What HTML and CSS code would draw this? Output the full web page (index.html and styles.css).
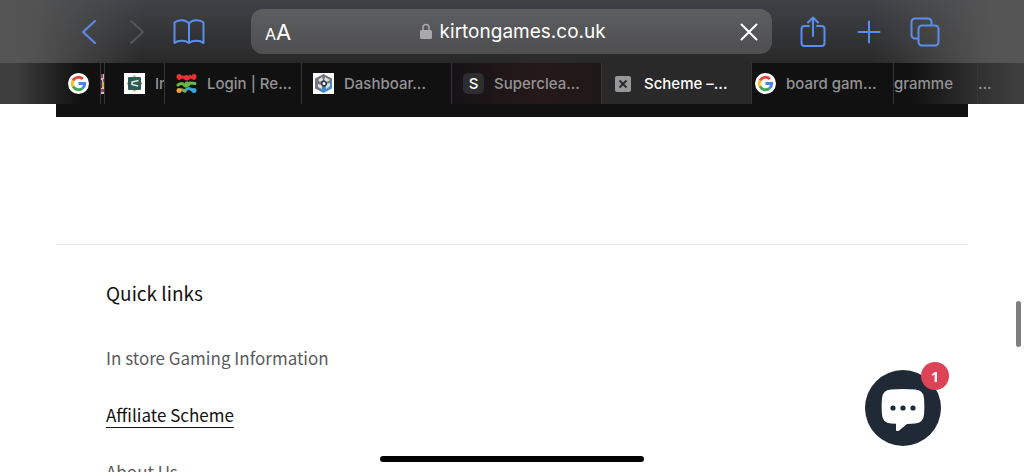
FILE: index.html
```html
<!DOCTYPE html>
<html lang="en">
<head>
  <meta charset="UTF-8" />
  <meta name="viewport" content="width=device-width, initial-scale=1.0"/>
  <title>Scheme – Kirton Games</title>
  <link rel="stylesheet" href="styles.css">
</head>
<body>
  <header class="browser">
    <div class="toolbar">
      <div class="nav-buttons">
        <button class="tool" aria-label="Back">
          <svg width="16" height="26" viewBox="0 0 16 26"><path d="M14 2 2 13l12 11"/></svg>
        </button>
        <button class="tool" aria-label="Forward" disabled>
          <svg width="16" height="26" viewBox="0 0 16 26"><path d="M2 2l12 11L2 24"/></svg>
        </button>
        <button class="tool wide" aria-label="Bookmarks">
          <svg width="32" height="26" viewBox="0 0 32 26"><path d="M16 4.500C13 .5 5 .2 1.500 3.500V24c3.500-3 11-3 14.500 0 3.500-3 11-3 14.500 0V3.500C27 .2 19 .5 16 4.500V24"/></svg>
        </button>
      </div>

      <form class="address">
        <button type="button" class="text-size" aria-label="Page settings"><small>A</small>A</button>
        <div class="site">
          <label for="url" aria-label="Address">
            <svg width="12" height="17" viewBox="0 0 12 17"><path d="M3 8V4.500a3 3 0 0 1 6 0V8" fill="none" stroke="#a9a9ac" stroke-width="1.500"/><rect y="7" width="12" height="9" rx="1.500" fill="#a9a9ac"/></svg>
          </label>
          <input id="url" type="text" value="kirtongames.co.uk" />
        </div>
        <button type="button" class="stop" aria-label="Stop loading">
          <svg width="18" height="18" viewBox="0 0 18 18"><path d="M1.500 1.500l15 15M16.500 1.500l-15 15"/></svg>
        </button>
      </form>

      <div class="page-buttons">
        <button class="tool wide" aria-label="Share">
          <svg width="26" height="32" viewBox="0 0 26 32"><path d="M9 10H4.500a3 3 0 0 0-3 3v14a3 3 0 0 0 3 3h17a3 3 0 0 0 3-3V13a3 3 0 0 0-3-3H17M13 20V2M8 6.500l5-5 5 5"/></svg>
        </button>
        <button class="tool wide" aria-label="New tab">
          <svg width="24" height="24" viewBox="0 0 24 24"><path d="M12 1.500v21M1.500 12h21"/></svg>
        </button>
        <button class="tool wide" aria-label="All tabs">
          <svg width="30" height="30" viewBox="0 0 30 30"><rect x="8.500" y="8.500" width="20" height="20" rx="3.500"/><path d="M8 21.500H5A3.500 3.500 0 0 1 1.500 18V5A3.500 3.500 0 0 1 5 1.500h13A3.500 3.500 0 0 1 21.500 5v3"/></svg>
        </button>
      </div>
    </div>

    <nav class="tabs" aria-label="Open tabs">
      <a class="tab end" href="#">
        <svg class="favicon" viewBox="0 0 22 22"><use href="#google"/></svg>
      </a>
      <a class="tab sliver" href="#" aria-label="Stacked tab">
        <svg width="4" height="20" viewBox="0 0 4 20"><path fill="#d9b9c4" d="M0 0h4v20H0z"/><path fill="#8c4562" d="M0 0h2v4H0zM2 5h2v3H2zM0 15h4v3H0z"/><path fill="#d8b13a" d="M1 8h3v5H1z"/><path fill="#4b2c4d" d="M0 6h1v8H0z"/></svg>
      </a>
      <a class="tab inset" href="#">
        <svg class="favicon" viewBox="0 0 21 21"><path fill="#fff" d="M0 0h21v21H0z"/><path fill="#d9ab35" d="M10.500 2l2.500 3h3v3l2.500 2.500L16 13v3h-3l-2.500 3L8 16H5v-3l-2.500-2.500L5 8V5h3z"/><rect x="4" y="4" width="13" height="13" rx="1" fill="#2d5c58"/><path fill="none" stroke="#dfeee0" stroke-width="1.500" d="M14.500 7.500L8 9v2.500l6 1.500"/></svg>
        <span>In</span>
      </a>
      <a class="tab" href="#">
        <svg class="favicon" viewBox="0 0 21 21"><g fill="none" stroke-linecap="round" stroke-width="3"><path stroke="#dc3232" d="M3 5.500q3-3 6-.5t5-1.500l4 2"/><path stroke="#69b845" d="M2 12q4-3 6 0t6-2l5 .5"/><path stroke="#38a5dc" d="M9 18q3-4 6-1.500l3 1"/><path stroke="#7cae60" d="M4 17q2-1 5 1"/></g><g fill="#ea3434"><circle cx="3" cy="3.500" r="2.500"/><circle cx="10.500" cy="4.500" r="2.500"/><circle cx="18" cy="3.500" r="2.500"/></g><circle cx="11" cy="11" r="2.500" fill="#69b845"/><circle cx="3" cy="17.500" r="2.500" fill="#f0a034"/><circle cx="18" cy="17.500" r="2.500" fill="#38a5dc"/></svg>
        <span>Login | Re...</span>
      </a>
      <a class="tab" href="#">
        <svg class="favicon" viewBox="0 0 21 21"><path fill="#fff" d="M0 0h21v21H0z"/><path fill="#73777d" d="M10.500 1L19 5.500v5l-8.500 9-8.500-4v-10z"/><path fill="#3d8dcf" d="M19 8v7.500L10.500 20 6 17.500l4-2 5-3z"/><path fill="#d8e1e9" d="M5 7l4-3 1 3-3 2zM12 4l5 3-3 2-3-1zM5 11l4 1v4l-4-2zM13 11l4-1v3l-4 3z"/><path fill="#30363f" d="M8 9l3-2 3 2v3l-3 2-3-2z"/><circle cx="11" cy="10.500" r="1.500" fill="#fff"/></svg>
        <span>Dashboar...</span>
      </a>
      <a class="tab warm" href="#">
        <b class="favicon letter">S</b>
        <span>Superclea...</span>
      </a>
      <a class="tab active" href="#" aria-current="page">
        <svg class="favicon" viewBox="0 0 21 21"><rect x="2" y="3" width="16" height="16" rx="2" fill="#98989b"/><path d="M6.500 7.500l7 7M13.500 7.500l-7 7" stroke="#29292a" stroke-width="1.800"/></svg>
        <span>Scheme –...</span>
      </a>
      <a class="tab tight" href="#">
        <svg class="favicon" viewBox="0 0 22 22">
          <g id="google"><circle cx="11" cy="11" r="11" fill="#fff"/><g fill="none" stroke-width="3"><path stroke="#e34a3c" d="M5.300 7.800A6.500 6.500 0 0 1 15.600 6.400"/><path stroke="#f5bd2c" d="M5.300 14.200a6.500 6.500 0 0 1 0-6.400"/><path stroke="#42a556" d="M15.200 16a6.500 6.500 0 0 1-9.900-1.800"/><path stroke="#4a82ec" d="M11 11h6.500a6.500 6.500 0 0 1-2.300 5"/></g></g>
        </svg>
        <span>board gam...</span>
      </a>
      <a class="tab flush fade" href="#"><span>gramme</span></a>
      <a class="tab flush last" href="#"><span>...</span></a>
    </nav>
  </header>

  <main class="page">
    <div class="banner"></div>
    <footer class="footer">
      <h2>Quick links</h2>
      <ul>
        <li><a href="#">In store Gaming Information</a></li>
        <li><a href="#" class="current">Affiliate Scheme</a></li>
        <li><a href="#">About Us</a></li>
      </ul>
    </footer>
  </main>

  <button class="chat" aria-label="Open chat, 1 unread message">
    <svg width="46" height="46" viewBox="0 0 46 46"><path fill="#fff" d="M11 4.500q12-1.200 24 0 8.500.5 9 9 .7 8 0 16-.5 8.500-9 9-4 .4-8 .4l-8.500 7q-2.500 1.500-2.500-1.500v-5.700l-5-.2q-8.500-.5-9-9-.7-8 0-16 .5-8.500 9-9z"/><g fill="#202a36"><circle cx="13" cy="23" r="2.600"/><circle cx="23" cy="23" r="2.600"/><circle cx="33" cy="23" r="2.600"/></g></svg>
    <span class="badge">1</span>
  </button>
  <div class="scroll-thumb"></div>
  <div class="home-bar"></div>
</body>
</html>
```
FILE: styles.css
```css
* {
  box-sizing: border-box;
}
body {
  margin: 0;
  height: 100vh;
  overflow: hidden;
  background: #fff;
  font-family: "Noto Sans CJK JP", "Noto Sans", sans-serif;
}
button {
  padding: 0;
  border: none;
  background: none;
  cursor: pointer;
}
a {
  color: inherit;
  text-decoration: none;
}
svg {
  display: block;
  flex: none;
}

/* browser bar */
.browser {
  font-family: Inter, sans-serif;
  background:
    linear-gradient(90deg, #555 0, #535353 3%, transparent 14%, transparent 85%, #555 97%),
    linear-gradient(#404248, #282828 64px);
}
.toolbar {
  display: flex;
  align-items: center;
  height: 63px;
  padding: 0 75px 0 69px;
}
.nav-buttons,
.page-buttons {
  display: flex;
  gap: 8px;
}
.tool {
  display: flex;
  align-items: center;
  justify-content: center;
  width: 40px;
  height: 44px;
  fill: none;
  stroke: #5b8def;
  stroke-width: 2;
  stroke-linecap: round;
  stroke-linejoin: round;
}
.tool.wide {
  width: 48px;
}
.tool:disabled {
  stroke: #55565a;
}
.address {
  display: flex;
  flex: 1;
  align-items: center;
  justify-content: space-between;
  height: 45px;
  margin: 0 17px 0 38px;
  padding: 0 14px;
  border-radius: 12px;
  background: linear-gradient(#5d5e61, #4e4e4f);
}
.text-size {
  color: #fff;
  font: 22px Inter, sans-serif;
}
.text-size small {
  font-size: 16px;
}
.site {
  display: flex;
  align-items: center;
  gap: 8px;
}
.site input {
  width: 172px;
  padding: 0;
  border: none;
  outline: none;
  background: none;
  color: #fff;
  font: 19px Inter, sans-serif;
}
.stop {
  stroke: #fff;
  stroke-width: 2;
  stroke-linecap: round;
}

/* tab strip */
.tabs {
  display: grid;
  grid-template-columns: 101fr 4fr 60fr 137fr 150fr 150fr 150fr 142fr 84fr 46fr;
  height: 41px;
}
.tab {
  display: flex;
  align-items: center;
  gap: 10px;
  min-width: 0;
  padding-left: 11px;
  overflow: hidden;
  border-right: 1px solid #363637;
  background: #111;
  color: #939395;
  font-size: 15px;
  font-weight: 500;
  white-space: nowrap;
}
.tab.end {
  justify-content: flex-end;
  padding-right: 11px;
  background: linear-gradient(90deg, #3e3e3e 15%, #111 80%);
}
.tab.sliver,
.tab.flush {
  padding-left: 0;
}
.tab.inset {
  padding-left: 19px;
}
.tab.tight {
  padding-left: 3px;
}
.tab.warm {
  background: linear-gradient(90deg, #151316, #271919 60%, #1d1818);
}
.tab.active {
  background: #29292a;
  color: #fff;
}
.tab.fade {
  background: linear-gradient(90deg, #111 20%, #303030);
}
.tab.last {
  border: none;
  background: linear-gradient(90deg, #303030, #404040);
}
.favicon {
  flex: none;
  width: 21px;
  height: 21px;
}
.letter {
  border-radius: 5px;
  background: #2d2d2f;
  color: #fff;
  font-size: 15px;
  font-weight: 500;
  line-height: 21px;
  text-align: center;
}

/* shop page */
.page {
  padding: 0 56px;
}
.banner {
  height: 13px;
  background: #111;
}
.footer {
  margin-top: 127px;
  padding: 32px 50px;
  border-top: 1px solid #e7e7e7;
}
.footer h2 {
  margin: 0 0 20px;
  color: #121212;
  font-size: 19px;
  font-weight: 400;
  line-height: 32px;
}
.footer ul {
  margin: 0;
  padding: 0;
  list-style: none;
}
.footer li {
  color: #5b5b5b;
  font-size: 17px;
  line-height: 57px;
}
.footer .current {
  color: #121212;
  text-decoration: underline;
  text-underline-offset: 5px;
}

.chat {
  position: fixed;
  right: 83px;
  bottom: 26px;
  display: flex;
  align-items: center;
  justify-content: center;
  width: 76px;
  height: 76px;
  border-radius: 50%;
  background: #202a36;
}
.badge {
  position: absolute;
  top: -8px;
  right: -8px;
  width: 28px;
  border-radius: 50%;
  background: #dd4257;
  color: #fff;
  font: bold 15px/28px "Noto Sans", sans-serif;
}
.scroll-thumb {
  position: fixed;
  top: 301px;
  right: 3px;
  width: 5px;
  height: 46px;
  border-radius: 3px;
  background: #7f7f7f;
}
.home-bar {
  position: fixed;
  bottom: 10px;
  left: 50%;
  width: 264px;
  height: 6px;
  margin-left: -132px;
  border-radius: 3px;
  background: #000;
}
```
